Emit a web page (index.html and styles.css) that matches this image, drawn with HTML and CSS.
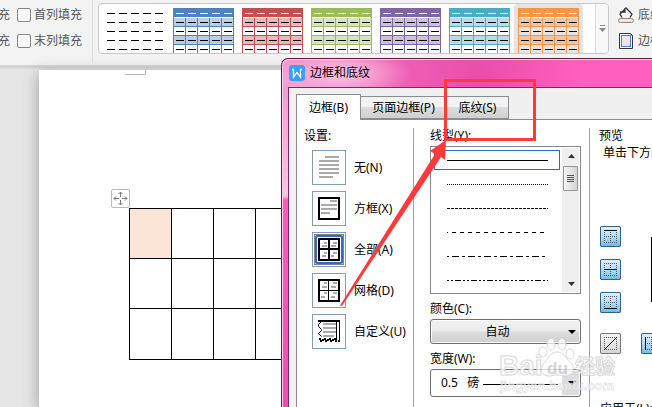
FILE: index.html
```html
<!DOCTYPE html>
<html lang="zh-CN">
<head>
<meta charset="utf-8">
<title>边框和底纹</title>
<link rel="stylesheet" href="styles.css">
</head>
<body>
<svg class="defs" aria-hidden="true">
  <defs>
    <symbol id="dashes" viewBox="0 0 61 45">
      <path d="M3 14.500h8m4 0h8m4 0h8m4 0h8m4 0h8M3 23.500h8m4 0h8m4 0h8m4 0h8m4 0h8M3 32.500h8m4 0h8m4 0h8m4 0h8m4 0h8M3 41.500h8m4 0h8m4 0h8m4 0h8m4 0h8" stroke="#000"/>
    </symbol>
    <symbol id="styled" viewBox="0 0 61 45">
      <path d="M0 10h61v8H0zM0 28h61v8H0z" fill="currentColor" opacity=".4"/>
      <path d="M0 0h61v9H0z" fill="currentColor"/>
      <path d="M1 9.500h59M3 5.500h8m4 0h8m4 0h8m4 0h8m4 0h8" stroke="#fff"/>
      <path d="M.5 9v36M12.500 10v35M24.500 10v35M36.500 10v35M48.500 10v35M60.500 9v36M0 18.500h61M0 27.500h61M0 36.500h61" stroke="currentColor"/>
      <use href="#dashes" width="61" height="45"/>
    </symbol>
    <symbol id="dots" viewBox="0 0 21 21">
      <path d="M4 4.500h13M4 10.500h13M4 16.500h13M4.500 4v13M10.500 4v13M16.500 4v13" fill="none" stroke="#555" stroke-dasharray="1 1"/>
    </symbol>
  </defs>
</svg>

<header class="ribbon">
  <div class="options">
    <div class="option"><span class="cut">充</span><input type="checkbox" id="first-col"><label for="first-col">首列填充</label></div>
    <div class="option"><span class="cut">充</span><input type="checkbox" id="last-col"><label for="last-col">末列填充</label></div>
  </div>
  <div class="gallery">
    <button class="thumb" aria-label="无样式"><svg width="61" height="45" viewBox="0 0 61 45"><path d="M3 5.500h8m4 0h8m4 0h8m4 0h8m4 0h8" stroke="#000"/><use href="#dashes" width="61" height="45"/></svg></button>
    <button class="thumb blue" aria-label="蓝色"><svg width="61" height="45"><use href="#styled"/></svg></button>
    <button class="thumb red" aria-label="红色"><svg width="61" height="45"><use href="#styled"/></svg></button>
    <button class="thumb green" aria-label="绿色"><svg width="61" height="45"><use href="#styled"/></svg></button>
    <button class="thumb purple" aria-label="紫色"><svg width="61" height="45"><use href="#styled"/></svg></button>
    <button class="thumb teal" aria-label="青色"><svg width="61" height="45"><use href="#styled"/></svg></button>
    <button class="thumb orange chosen" aria-label="橙色"><svg width="61" height="45"><use href="#styled"/></svg></button>
    <button class="more" aria-label="更多"><svg width="7" height="7" viewBox="0 0 7 7"><path d="M1 .5h5" stroke="#888"/><path d="M0 3h7L3.500 7z" fill="#888"/></svg></button>
  </div>
  <div class="commands">
    <button class="command"><svg width="16" height="16" viewBox="0 0 16 16"><path d="M4 10.500 2 7l6-6 6 6-2 3.500M2 5h5V1" fill="none" stroke="#333" stroke-width="1.300"/><rect x=".5" y="11.500" width="15" height="4" rx="2" fill="#fbe5d6" stroke="#888"/></svg>底纹</button>
    <button class="command"><svg width="16" height="16" viewBox="0 0 16 16"><path d="M1.500.5h11l2 2v13h-13z" fill="#fff" stroke="#333"/><path d="M12 1l2 2v-2z" fill="#333"/><rect x="3.500" y="2.500" width="9" height="11" fill="#e3e8f1" stroke="#4a7ed0"/></svg>边框</button>
  </div>
</header>

<main class="workspace">
  <div class="page">
    <svg class="margin-mark" width="21" height="6" viewBox="0 0 21 6"><path d="M0 4.500h20.500V0" fill="none" stroke="#bbb"/></svg>
    <div class="table-block">
      <button class="handle" aria-label="移动表格"><svg width="19" height="19" viewBox="0 0 19 19"><path d="M9.500 3v5M9.500 11v5M3 9.500h5M11 9.500h5M7.500 5l2-2 2 2M7.500 14l2 2 2-2M5 7.500l-2 2 2 2M14 7.500l2 2-2 2" fill="none" stroke="#777"/></svg></button>
      <table class="grid">
        <tr><td class="filled"></td><td></td><td></td><td></td><td></td></tr>
        <tr><td></td><td></td><td></td><td></td><td></td></tr>
        <tr><td></td><td></td><td></td><td></td><td></td></tr>
      </table>
    </div>
  </div>
</main>

<section class="dialog" role="dialog" aria-labelledby="dialog-title">
  <div class="titlebar">
    <svg width="16" height="16" viewBox="0 0 16 16"><rect width="16" height="16" rx="3" fill="#3c9dfb"/><path d="M3 4.500h1.500V12L8 7.500l3.500 4.500V4.500H13" fill="none" stroke="#fff" stroke-width="1.300"/></svg>
    <h1 id="dialog-title">边框和底纹</h1>
  </div>
  <div class="client">
    <div class="tabs" role="tablist">
      <button class="tab active" role="tab">边框(B)</button>
      <button class="tab wide" role="tab">页面边框(P)</button>
      <button class="tab" role="tab">底纹(S)</button>
    </div>
    <div class="panel">
      <div class="settings">
        <h2>设置:</h2>
        <div class="setting"><button id="none"><svg width="32" height="33" viewBox="0 0 32 33"><path d="M12 6h14M6 10h20M6 14h20M6 18h20M6 22h20M6 26h14" stroke="#aaa" stroke-width="2"/></svg></button><label for="none">无(N)</label></div>
        <div class="setting"><button id="box"><svg width="32" height="33" viewBox="0 0 32 33"><rect x="6" y="6" width="20" height="21" fill="none" stroke="#000" stroke-width="2"/><path d="M17 9h7M8 13h16M8 17h16M8 21h9" stroke="#aaa" stroke-width="2"/></svg></button><label for="box">方框(X)</label></div>
        <div class="setting"><button id="all"><svg width="32" height="33" viewBox="0 0 32 33"><rect x="1.500" y="1.500" width="29" height="30" fill="none" stroke="#000" stroke-dasharray="1 1"/><rect x="3" y="3" width="26" height="27" rx="1" fill="#fff" stroke="#316ac5" stroke-width="2"/><rect x="6" y="6" width="20" height="21" fill="none" stroke="#000" stroke-width="2"/><path d="M16 6v21M6 16h20" stroke="#000" stroke-width="2"/><path d="M11 10h3M9 13h5M20 10h4M18 13h5M11 20h3M9 23h4M20 20h4M18 23h3" stroke="#aaa" stroke-width="2"/></svg></button><label for="all">全部(A)</label></div>
        <div class="setting"><button id="mesh"><svg width="32" height="33" viewBox="0 0 32 33"><rect x="6" y="6" width="20" height="21" fill="none" stroke="#000" stroke-width="2"/><path d="M15.500 6v21M6 16.500h20" stroke="#000"/><path d="M11 9h3M9 13h5M20 9h4M18 13h5M11 19h3M8 23h4M20 19h4M18 23h4" stroke="#aaa" stroke-width="2"/></svg></button><label for="mesh">网格(D)</label></div>
        <div class="setting"><button id="custom"><svg width="32" height="33" viewBox="0 0 32 33"><path d="M5 6h21" stroke="#000" stroke-width="2"/><path d="M23.500 6v21M26.500 5v22M5.500 6.500h3l-3 3v2l3 3v1l-3 3 3 3" fill="none" stroke="#000"/><path d="M10 9h13M10 13h13M10 17h13M10 21h11" stroke="#aaa" stroke-width="2"/><path d="M6 24h2v2h2v-2h3v2h2v-2h3v2h2v-2h3v2h3" fill="none" stroke="#000" stroke-width="2" stroke-dasharray="2 1"/></svg></button><label for="custom">自定义(U)</label></div>
      </div>

      <div class="lines">
        <h2>线型(Y):</h2>
        <div class="listbox">
          <div class="choices" role="listbox" aria-label="线型">
            <div class="choice picked" role="option"><svg height="1"><path d="M0 .5h101"/></svg></div>
            <div class="choice" role="option"><svg height="1"><path d="M0 .5h101" stroke-dasharray="1 1"/></svg></div>
            <div class="choice" role="option"><svg height="1"><path d="M0 .5h101" stroke-dasharray="3 1"/></svg></div>
            <div class="choice" role="option"><svg height="1"><path d="M0 .5h101" stroke-dasharray="4 4" stroke-dashoffset="3"/></svg></div>
            <div class="choice" role="option"><svg height="1"><path d="M0 .5h101" stroke-dasharray="7 3 3 3" stroke-dashoffset="11"/></svg></div>
            <div class="choice" role="option"><svg height="1"><path d="M0 .5h101" stroke-dasharray="6 2 2 2 2 2" stroke-dashoffset="8"/></svg></div>
          </div>
          <div class="scrollbar">
            <svg width="16" height="14" viewBox="0 0 16 14"><path d="M5 10l3.500-4L12 10z" fill="#333"/></svg>
            <div class="scroll-thumb"><svg width="7" height="9" viewBox="0 0 7 9"><path d="M0 1.500h7M0 3.500h7M0 5.500h7M0 7.500h7" stroke="#555"/></svg></div>
            <svg class="down" width="16" height="14" viewBox="0 0 16 14"><path d="M5 4l3.500 4L12 4z" fill="#333"/></svg>
          </div>
        </div>
        <label class="caption" for="color">颜色(C):</label>
        <div class="dropdown">
          <select id="color"><option>自动</option></select>
          <svg class="arrow" width="8" height="4" viewBox="0 0 8 4"><path d="M0 0h8L4 4z"/></svg>
        </div>
        <label class="caption" for="width">宽度(W):</label>
        <div class="dropdown weight">
          <select id="width"><option>0.5&nbsp;&nbsp;&nbsp;磅</option></select>
          <svg class="rule" height="1"><path d="M0 .5h75" stroke="#000"/></svg>
          <svg class="arrow" width="8" height="4" viewBox="0 0 8 4"><path d="M0 0h8L4 4z"/></svg>
        </div>
      </div>

      <div class="preview">
        <h2>预览</h2>
        <p>单击下方图示</p>
        <div class="sample">
          <div class="edges">
            <button class="edge on" aria-label="上边框"><svg width="21" height="21"><use href="#dots"/><path d="M4 4.500h13" stroke="#111"/></svg></button>
            <button class="edge on" aria-label="内部横线"><svg width="21" height="21"><use href="#dots"/><path d="M4 10.500h13" stroke="#111"/></svg></button>
            <button class="edge on" aria-label="下边框"><svg width="21" height="21"><use href="#dots"/><path d="M4 16.500h13" stroke="#111"/></svg></button>
          </div>
          <div class="specimen"></div>
        </div>
        <div class="edge-row">
          <button class="edge" aria-label="斜线"><svg width="21" height="21" viewBox="0 0 21 21"><path d="M4.500 4v13M4 4.500h13M16.500 4v13M4 16.500h13" stroke="#555" stroke-dasharray="1 1"/><path d="M4 17L17 4" stroke="#111"/></svg></button>
          <button class="edge on" aria-label="左边框"><svg width="21" height="21"><use href="#dots"/><path d="M4.500 4v13" stroke="#111"/></svg></button>
        </div>
        <p class="apply">应用于(L):</p>
      </div>
    </div>
  </div>
</section>

<svg class="watermark" width="122" height="58" viewBox="0 0 122 58" aria-hidden="true">
  <g fill="#fff" fill-opacity=".85" stroke="#d2d2d2" stroke-width="1">
    <text class="wm-name" x="1" y="37">Bai</text>
    <ellipse cx="45" cy="14" rx="4" ry="5"/><ellipse cx="53" cy="6" rx="4" ry="6"/><ellipse cx="64" cy="6" rx="4" ry="6"/><ellipse cx="72" cy="16" rx="4" ry="5"/>
    <path d="M59 14c-7 0-8 6-12 10-6 5-4 14 3 14 4 0 5-1 9-1s5 1 9 1c8 0 10-9 4-14-5-4-6-10-13-10z"/>
    <text class="wm-du" x="49" y="36">du</text>
    <text class="wm-cjk" x="77" y="36">经验</text>
    <text class="wm-url" x="2" y="52">jingyan.baidu.com</text>
  </g>
</svg>

<svg class="annotation" width="196" height="228" viewBox="0 0 196 228" aria-hidden="true">
  <rect x="105.500" y="2.500" width="89" height="59" fill="none" stroke="#fb3b3b" stroke-width="3"/>
  <path d="M0 227.500L95 76l-5-3 16-11-1 20-4-3L2 228z" fill="#fb3b3b"/>
</svg>
</body>
</html>
```

FILE: styles.css
```css
* { box-sizing: border-box; }

body {
  margin: 0;
  height: 100vh;
  display: flex;
  flex-direction: column;
  position: relative;
  overflow: hidden;
  background: #e6e6e6;
  color: #000;
  font: 12px/16px "Noto Sans", "Noto Sans CJK SC", sans-serif;
}

button, select { font: inherit; color: inherit; padding: 0; margin: 0; border: 0; background: none; }
svg { display: block; flex: none; }
h1, h2, p { margin: 0; font: inherit; white-space: nowrap; }
.defs { position: absolute; width: 0; height: 0; }

/* Ribbon */
.ribbon {
  flex: none;
  display: flex;
  align-items: flex-start;
  height: 66px;
  overflow: hidden;
  background: #f3f3f3;
  border-bottom: 1px solid #d8d8d8;
  color: #555;
}
.options {
  flex: none;
  display: flex;
  flex-direction: column;
  gap: 10px;
  width: 93px;
  height: 63px;
  padding-top: 7px;
  border-right: 1px solid #dedede;
}
.option { display: flex; align-items: center; height: 16px; }
.cut { width: 10px; margin-right: 7px; display: flex; justify-content: flex-end; }
.option input {
  appearance: none;
  width: 14px;
  height: 14px;
  margin: 0 3px 0 0;
  border: 1px solid #888;
  border-radius: 2px;
  background: #f8f8f8;
}
.gallery {
  flex: none;
  display: flex;
  height: 51px;
  margin: 3px 0 0 5px;
  padding-left: 1px;
  border: 1px solid #c8c8c8;
  border-radius: 4px;
  background: #fff;
  overflow: hidden;
}
.thumb { padding: 4px 4px 0; border-radius: 4px 4px 0 0; }
.chosen { background: #e4e4e4; }
.blue { color: #4f81bd; }
.red { color: #c0504d; }
.green { color: #9bbb59; }
.purple { color: #8064a2; }
.teal { color: #4bacc6; }
.orange { color: #f79646; }
.more {
  width: 13px;
  margin-left: 12px;
  display: flex;
  align-items: center;
  justify-content: center;
  border-left: 1px solid #ddd;
  background: #f8f8f8;
}
.commands { flex: none; display: flex; flex-direction: column; gap: 10px; padding: 7px 0 0 9px; }
.command { display: flex; align-items: center; gap: 4px; height: 16px; white-space: nowrap; }

/* Document */
.workspace {
  flex: 1;
  padding: 4px 0 0 39px;
  background: linear-gradient(#ccc, transparent 4px);
}
.page {
  height: 100%;
  padding: 0 0 0 72px;
  background: #fff;
  box-shadow: 0 4px 15px #999;
}
.margin-mark { margin-left: 14px; }
.table-block { padding-top: 113px; }
.handle { display: block; border: 1px solid #bbb; border-radius: 2px; width: 19px; height: 19px; background: #fff; }
.handle svg { margin: -1px; }
.grid { margin-left: 18px; border-collapse: collapse; table-layout: fixed; width: 211px; }
.grid td { height: 50px; padding: 0; border: 1px solid #000; }
.grid tr:last-child td { height: 51px; }
.grid .filled { background: #fbe5d6; }

/* Dialog */
.dialog {
  position: absolute;
  left: 281px;
  top: 58px;
  right: 0;
  bottom: 0;
  display: flex;
  flex-direction: column;
  padding-left: 6px;
  border: solid #5a1c40;
  border-width: 1px 0 0 1px;
  border-radius: 7px 0 0 0;
  box-shadow: inset 1px 1px #ffd0ec;
  background:
    radial-gradient(ellipse 70px 26px at 60px 15px, #fbc4e4, transparent),
    linear-gradient(90deg, transparent 7px, #f060b6 110px, #ea4dab 200px, #ff60be 300px) 0 0 / 100% 29px no-repeat,
    linear-gradient(#f092cd, #ffc4e6 137px, #ff5abb 141px, #f04fb0);
  overflow: hidden;
}
.titlebar { flex: none; display: flex; align-items: center; gap: 5px; height: 28px; padding-left: 1px; }
.client {
  flex: 1;
  min-height: 0;
  display: flex;
  flex-direction: column;
  padding: 7px 0 0 7px;
  border: solid #7b2a5b;
  border-width: 1px 0 0 1px;
  background: #f0f0f0;
}
.tabs { flex: none; display: flex; align-items: flex-end; height: 25px; }
.tab {
  width: 62px;
  height: 23px;
  margin-bottom: 1px;
  border: 1px solid #898c95;
  border-left-width: 0;
  background: linear-gradient(#f3f3f3 45%, #ddd 50%, #cfcfcf);
  white-space: nowrap;
}
.tab.wide { width: 86px; }
.tab.active {
  position: relative;
  width: 65px;
  height: 26px;
  margin-bottom: 0;
  border-left-width: 1px;
  border-bottom: 0;
  background: #fff;
}
.panel {
  flex: 1;
  min-height: 0;
  display: flex;
  margin-top: -1px;
  padding-top: 8px;
  border: solid #898c95;
  border-width: 1px 0 0 1px;
  background: #fff;
}
.settings { flex: none; width: 117px; padding-left: 7px; border-right: 1px solid #a0a0a0; }
.settings h2 { margin-bottom: 6px; }
.setting { display: flex; align-items: center; gap: 8px; height: 35px; margin: 0 0 6px 8px; white-space: nowrap; }
.setting button { width: 34px; height: 35px; border: 1px solid #7f9db9; background: #fff; }
.lines { flex: none; width: 176px; padding: 0 8px 0 16px; border-right: 1px solid #a0a0a0; }
.listbox { display: flex; justify-content: space-between; height: 148px; margin-top: 2px; padding: 1px; border: 1px solid #828790; }
.choices { flex: 1; padding: 2px 2px 0; }
.choice { display: flex; align-items: center; height: 20px; margin-bottom: 4px; padding-left: 12px; border: 1px solid transparent; }
.choice svg { width: 101px; stroke: #000; }
.picked { border-color: #316ac5; }
.scrollbar { width: 17px; display: flex; flex-direction: column; align-items: center; background: #efefef; }
.scroll-thumb {
  display: flex;
  align-items: center;
  justify-content: center;
  width: 15px;
  height: 25px;
  margin-top: 4px;
  border: 1px solid #979797;
  border-radius: 1px;
  background: linear-gradient(90deg, #f5f5f5, #d5d5d5);
}
.down { margin-top: auto; }
.caption { display: block; margin: 7px 0 2px; }
.dropdown { position: relative; height: 25px; }
.dropdown select {
  appearance: none;
  width: 100%;
  height: 100%;
  padding: 0 16px 0 0;
  border: 1px solid #707070;
  border-radius: 3px;
  background: linear-gradient(#f2f2f2, #ebebeb 48%, #dddddd 52%, #cfcfcf);
  box-shadow: inset 0 0 0 1px #fafafa;
  text-align-last: center;
}
.arrow { position: absolute; right: 5px; top: 50%; margin-top: -2px; }
.weight { height: 28px; }
.weight select {
  padding-left: 10px;
  text-align-last: left;
  background: linear-gradient(90deg, #fff calc(100% - 18px), #ddd calc(100% - 18px));
}
.rule { position: absolute; left: 53px; top: 15px; width: 75px; }
.preview { flex: 1; min-width: 0; padding-left: 9px; overflow: hidden; }
.preview p { margin: 1px 0 0 4px; }
.sample { display: flex; align-items: center; gap: 30px; width: 152px; margin: 65px 0 0 1px; }
.edges { display: flex; flex-direction: column; gap: 12px; }
.edge { display: block; width: 21px; height: 21px; border-radius: 2px; background: linear-gradient(#f6f6f6, #d5d5d5); box-shadow: inset 0 0 0 1px #777; }
.edge.on { background: linear-gradient(#e0f2fc, #b4dcf2 50%, #72b6de); box-shadow: inset 0 0 0 1px #2c628b; }
.specimen { width: 96px; height: 65px; border: 1px solid #000; }
.edge-row { display: flex; gap: 20px; width: 152px; margin: 20px 0 0 1px; }
.preview .apply { margin: 47px 0 0 1px; }

/* Overlays */
.watermark { position: absolute; left: 498px; top: 338px; overflow: visible; opacity: .85; }
.watermark text { font-family: "Liberation Sans", "Noto Sans CJK SC", sans-serif; font-weight: bold; }
.wm-name { font-size: 28px; }
.wm-du { font-size: 17px; fill: #c4c4c4; stroke: none; }
.wm-cjk { font-size: 20px; }
.wm-url { font-size: 13px; stroke-width: 0.5px; }
.annotation { position: absolute; left: 340px; top: 78px; }
```
